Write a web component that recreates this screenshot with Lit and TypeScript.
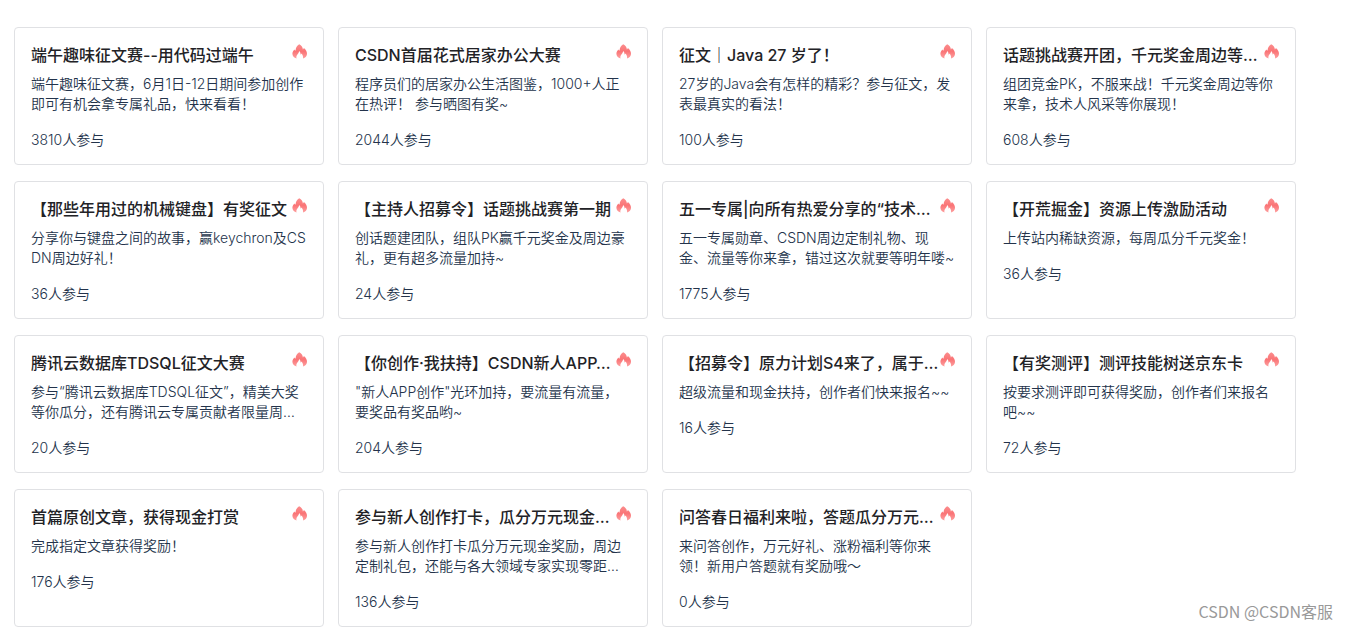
import { LitElement, html, css, svg } from "lit";
import { customElement, property } from "lit/decorators.js";

interface Activity {
  title: string;
  desc: string;
  count: number;
}

const activities: Activity[] = [
  { title: "端午趣味征文赛--用代码过端午", desc: "端午趣味征文赛，6月1日-12日期间参加创作即可有机会拿专属礼品，快来看看！", count: 3810 },
  { title: "CSDN首届花式居家办公大赛", desc: "程序员们的居家办公生活图鉴，1000+人正在热评！ 参与晒图有奖~", count: 2044 },
  { title: "征文｜Java 27 岁了！", desc: "27岁的Java会有怎样的精彩？参与征文，发表最真实的看法！", count: 100 },
  { title: "话题挑战赛开团，千元奖金周边等…", desc: "组团竞金PK，不服来战！千元奖金周边等你来拿，技术人风采等你展现！", count: 608 },
  { title: "【那些年用过的机械键盘】有奖征文", desc: "分享你与键盘之间的故事，赢keychron及CSDN周边好礼！", count: 36 },
  { title: "【主持人招募令】话题挑战赛第一期", desc: "创话题建团队，组队PK赢千元奖金及周边豪礼，更有超多流量加持~", count: 24 },
  { title: "五一专属|向所有热爱分享的“技术…", desc: "五一专属勋章、CSDN周边定制礼物、现金、流量等你来拿，错过这次就要等明年喽~", count: 1775 },
  { title: "【开荒掘金】资源上传激励活动", desc: "上传站内稀缺资源，每周瓜分千元奖金！", count: 36 },
  { title: "腾讯云数据库TDSQL征文大赛", desc: "参与“腾讯云数据库TDSQL征文”，精美大奖等你瓜分，还有腾讯云专属贡献者限量周…", count: 20 },
  { title: "【你创作·我扶持】CSDN新人APP…", desc: "\"新人APP创作\"光环加持，要流量有流量，要奖品有奖品哟~", count: 204 },
  { title: "【招募令】原力计划S4来了，属于…", desc: "超级流量和现金扶持，创作者们快来报名~~", count: 16 },
  { title: "【有奖测评】测评技能树送京东卡", desc: "按要求测评即可获得奖励，创作者们来报名吧~~", count: 72 },
  { title: "首篇原创文章，获得现金打赏", desc: "完成指定文章获得奖励！", count: 176 },
  { title: "参与新人创作打卡，瓜分万元现金…", desc: "参与新人创作打卡瓜分万元现金奖励，周边定制礼包，还能与各大领域专家实现零距…", count: 136 },
  { title: "问答春日福利来啦，答题瓜分万元…", desc: "来问答创作，万元好礼、涨粉福利等你来领！新用户答题就有奖励哦～", count: 0 },
];

const flame = svg`
  <defs>
    <linearGradient id="heat" x1="0" y1="0" x2="0" y2="1">
      <stop offset="0" stop-color="#fb8e8e"></stop>
      <stop offset="0.5" stop-color="#fa7476"></stop>
      <stop offset="1" stop-color="#fda0a0"></stop>
    </linearGradient>
  </defs>
  <path fill="url(#heat)" d="M8.2 1.2C10.6 2.4 11.8 4.2 11.9 6.4C12.4 6.1 12.7 5.7 12.9 5.1C14.9 6.8 16 8.7 16 10.8C16 13 14.6 14.8 12 15.6C12.4 13.2 11.6 11.6 10.5 10.4C10.2 11 9.9 11.3 9.5 11.5C9.6 10.1 9.2 8.9 8.1 8C8 9.6 7.2 10.6 6.4 11.5C5.4 12.7 5.1 14 5.6 15.6C3 14.9 1.4 13.1 1.4 10.8C1.4 9 2.3 7.8 3.3 6.6C3.6 7.2 4 7.5 4.6 7.6C4.6 4.8 5.8 2.6 8.2 1.2Z"></path>
`;

@customElement("activity-card")
class ActivityCard extends LitElement {
  @property({ attribute: false }) item!: Activity;

  static styles = css`
    :host {
      display: block;
      box-sizing: border-box;
      min-width: 0;
      padding: 15px 16px 14px;
      border: 1px solid #e0e1e4;
      border-radius: 4px;
      background: #fff;
    }
    .head {
      display: flex;
      align-items: flex-start;
      justify-content: space-between;
    }
    .title {
      margin: 0;
      min-width: 0;
      overflow: hidden;
      white-space: nowrap;
      text-overflow: ellipsis;
      font-size: 16px;
      font-weight: 500;
      line-height: 24px;
      color: #222226;
    }
    .flame {
      flex: none;
      width: 16px;
      height: 16px;
    }
    .desc {
      margin: 7px 0 16px;
      font-size: 14px;
      font-weight: 350;
      line-height: 20px;
      color: #23334b;
      word-break: break-all;
    }
    .count {
      margin: 0;
      font-size: 14px;
      font-weight: 350;
      line-height: 20px;
      color: #23334b;
    }
  `;

  render() {
    return html`
      <div class="head">
        <h3 class="title">${this.item.title}</h3>
        <svg class="flame" viewBox="0 0 16 16" aria-hidden="true">${flame}</svg>
      </div>
      <p class="desc">${this.item.desc}</p>
      <p class="count">${this.item.count}人参与</p>
    `;
  }
}

@customElement("app-root")
class AppRoot extends LitElement {
  static styles = css`
    :host {
      display: block;
      position: relative;
      padding: 27px 52px 3px 14px;
      background: #fff;
      font-family: Inter, "Noto Sans CJK SC", sans-serif;
    }
    .grid {
      display: grid;
      grid-template-columns: repeat(4, minmax(0, 1fr));
      gap: 16px 14px;
    }
    .watermark {
      position: absolute;
      right: 15px;
      bottom: 7px;
      font-family: "Noto Sans CJK SC", sans-serif;
      font-size: 16px;
      line-height: 24px;
      color: #999;
    }
  `;

  render() {
    return html`
      <main class="grid">
        ${activities.map((item) => html`<activity-card .item=${item}></activity-card>`)}
      </main>
      <div class="watermark">CSDN @CSDN客服</div>
    `;
  }
}
